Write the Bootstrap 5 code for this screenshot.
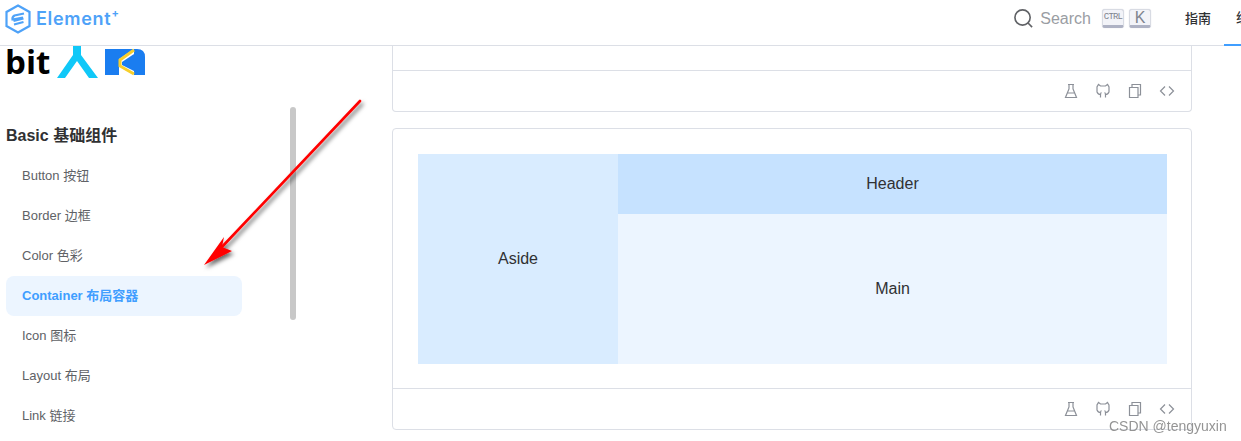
<!DOCTYPE html>
<html lang="zh">
<head>
    <meta charset="UTF-8">
    <meta name="viewport" content="width=device-width, initial-scale=1.0">
    <title>Container 布局容器</title>
    <link href="https://cdn.jsdelivr.net/npm/bootstrap@5.3.0/dist/css/bootstrap.min.css" rel="stylesheet">
    <style>
        html, body { height: 441px; overflow: hidden; }
        body { font-family: "Liberation Sans", "Noto Sans CJK SC", sans-serif; color: #303133; background: #fff; }
        .page-top { height: 46px; border-bottom: 1px solid #dcdfe6; padding-left: 5px; }
        .top-row { height: 37px; }
        .brand-word { font-family: "Inter", "Liberation Sans", sans-serif; font-size: 18px; font-weight: 600; color: #4ea2f8; margin-left: 5px; letter-spacing: .7px; }
        .brand-word sup { font-size: 11px; font-weight: 700; top: -.75em; margin-left: 0; letter-spacing: 0; }
        .search-word { font-size: 16px; color: #9a9da3; margin: 0 11px 0 6px; }
        .key-cap { height: 19px; border: 1px solid #d8dbe3; border-bottom: 3px solid #aeb2c4; border-radius: 3px; background: #f2f3f8; color: #80848f; box-shadow: 0 0 1px #c6c9d6; }
        .key-ctrl { width: 22px; font-size: 9px; font-family: "Liberation Mono", monospace; letter-spacing: -.8px; margin-right: 5px; }
        .key-k { width: 22px; font-size: 16px; }
        .top-link { font-size: 13px; color: #303133; font-weight: 500; }
        .top-link-main { margin-left: 34px; }
        .top-link-cut { width: 17px; height: 46px; margin: 0 0 -9px 13px; padding-left: 12px; overflow: hidden; white-space: nowrap; border-bottom: 2px solid #409eff; line-height: 36px; }
        .page-body { height: 395px; }
        .side-col { width: 392px; padding-left: 6px; }
        .bit-logo { height: 33px; }
        .bit-word { font-family: "Open Sans", "Liberation Sans", sans-serif; font-size: 33px; font-weight: 700; color: #000; line-height: 30px; margin: 1px 7px 0 -1px; }
        .side-title { font-size: 16px; font-weight: 700; margin: 45px 0 8px; line-height: 24px; color: #303133; }
        .side-item { width: 236px; height: 40px; line-height: 40px; padding-left: 16px; font-size: 13px; color: #606266; border-radius: 8px; }
        .side-item.active-item { background: #ecf5ff; color: #409eff; font-weight: 700; }
        .side-scroll { position: absolute; left: 290px; top: 61px; width: 6px; height: 213px; background: #c8c8c8; border-radius: 3px; }
        .main-col { width: 800px; }
        .demo-box { border: 1px solid #dcdfe6; border-radius: 4px; }
        .demo-cut { border-top: 0; border-top-left-radius: 0; border-top-right-radius: 0; height: 66px; margin-bottom: 16px; }
        .demo-space { height: 25px; border-bottom: 1px solid #dcdfe6; }
        .demo-tools { height: 40px; gap: 16px; padding-right: 16px; }
        .demo-tools svg { width: 16px; height: 16px; fill: none; stroke: #8c9098; stroke-width: 1.2; }
        .demo-full { height: 302px; }
        .demo-inner { height: 260px; padding: 25px 24px 24px 25px; border-bottom: 1px solid #dcdfe6; }
        .el-aside { width: 200px; background: #d9ecff; font-size: 16px; }
        .el-head { height: 60px; background: #c6e2ff; font-size: 16px; }
        .el-main { background: #ecf5ff; font-size: 16px; }
        .red-arrow { position: absolute; left: 195px; top: 90px; width: 175px; height: 185px; overflow: visible; }
        .mark-text { position: absolute; left: 1109px; top: 416px; font-size: 14px; color: #8f8f8f; opacity: .95; }
    </style>
</head>
<body>
    <header class="page-top">
        <div class="top-row d-flex align-items-center">
            <svg width="26" height="30" viewBox="0 0 26 30">
                <path d="M13 1.500 24.500 8V22L13 28.500 1.500 22V8Z" fill="none" stroke="#4ea2f8" stroke-width="2.200"/>
                <path d="M19 9.500 9.500 11.500Q7 13 7.500 15.500L18 13.500M18.500 14.500 8.500 17M18.500 18 9 20.500" fill="none" stroke="#4ea2f8" stroke-width="2.200"/>
            </svg>
            <span class="brand-word">Element<sup>+</sup></span>
            <div class="ms-auto d-flex align-items-center">
                <svg width="21" height="21" viewBox="0 0 22 22" fill="none" stroke="#606266" stroke-width="1.700">
                    <circle cx="10" cy="10" r="8"/>
                    <path d="M15.500 15.500 20 20"/>
                </svg>
                <span class="search-word">Search</span>
                <span class="key-cap key-ctrl d-flex align-items-center justify-content-center">CTRL</span>
                <span class="key-cap key-k d-flex align-items-center justify-content-center">K</span>
                <span class="top-link top-link-main">指南</span>
                <span class="top-link top-link-cut">组件</span>
            </div>
        </div>
    </header>

    <div class="page-body d-flex position-relative">
        <aside class="side-col flex-shrink-0">
            <div class="bit-logo d-flex align-items-start">
                <span class="bit-word">bit</span>
                <svg width="88" height="33" viewBox="0 0 88 33">
                    <path d="M16 0H24V9L41 32H32L20 15 8 32H0L16 9Z" fill="#10c8f8"/>
                    <path d="M48 3H62V29H48ZM62 3H77L62 13ZM77 3H80Q88 3 88 11V29H77ZM77 8 65 16V19L77 25Z" fill="#1a7df0"/>
                    <path d="M77 4 63 14V20L77 28" fill="none" stroke="#f7cf2b" stroke-width="3"/>
                </svg>
            </div>
            <div class="side-title">Basic 基础组件</div>
            <div class="side-item">Button 按钮</div>
            <div class="side-item">Border 边框</div>
            <div class="side-item">Color 色彩</div>
            <div class="side-item active-item">Container 布局容器</div>
            <div class="side-item">Icon 图标</div>
            <div class="side-item">Layout 布局</div>
            <div class="side-item">Link 链接</div>
        </aside>
        <div class="side-scroll"></div>

        <main class="main-col flex-shrink-0">
            <div class="demo-box demo-cut">
                <div class="demo-space"></div>
                <div class="demo-tools d-flex align-items-center justify-content-end">
                    <svg viewBox="0 0 16 16"><path d="M5 1.500H11M6 1.500V6L2.500 14.500H13.500L10 6V1.500M4.500 10H11.500"/></svg>
                    <svg viewBox="0 0 16 16"><path d="M5.500 14.500V11.500Q3 11.500 2 9V4L3.500 1.500 5.500 3H10.500L12.500 1.500 14 4V9Q13 11.500 10.500 11.500V14.500M5.500 11.500Q6 9.500 6.500 9.500M10.500 11.500Q10 9.500 9.500 9.500"/></svg>
                    <svg viewBox="0 0 16 16"><path d="M2.500 4.500H11V14.500H2.500ZM5 4.500V1.500H13.500V12H11"/></svg>
                    <svg viewBox="0 0 16 16"><path d="M6 3.500 1.500 8 6 12.500M10 3.500 14.500 8 10 12.500"/></svg>
                </div>
            </div>
            <div class="demo-box demo-full">
                <div class="demo-inner d-flex">
                    <div class="el-aside d-flex align-items-center justify-content-center">Aside</div>
                    <div class="flex-grow-1 d-flex flex-column">
                        <div class="el-head d-flex align-items-center justify-content-center">Header</div>
                        <div class="el-main flex-grow-1 d-flex align-items-center justify-content-center">Main</div>
                    </div>
                </div>
                <div class="demo-tools d-flex align-items-center justify-content-end">
                    <svg viewBox="0 0 16 16"><path d="M5 1.500H11M6 1.500V6L2.500 14.500H13.500L10 6V1.500M4.500 10H11.500"/></svg>
                    <svg viewBox="0 0 16 16"><path d="M5.500 14.500V11.500Q3 11.500 2 9V4L3.500 1.500 5.500 3H10.500L12.500 1.500 14 4V9Q13 11.500 10.500 11.500V14.500M5.500 11.500Q6 9.500 6.500 9.500M10.500 11.500Q10 9.500 9.500 9.500"/></svg>
                    <svg viewBox="0 0 16 16"><path d="M2.500 4.500H11V14.500H2.500ZM5 4.500V1.500H13.500V12H11"/></svg>
                    <svg viewBox="0 0 16 16"><path d="M6 3.500 1.500 8 6 12.500M10 3.500 14.500 8 10 12.500"/></svg>
                </div>
            </div>
        </main>
    </div>

    <svg class="red-arrow" viewBox="0 0 175 185">
        <defs>
            <filter id="arrowShade" x="-20%" y="-20%" width="140%" height="140%">
                <feDropShadow dx="2" dy="3" stdDeviation="2" flood-color="#000" flood-opacity=".6"/>
            </filter>
        </defs>
        <g filter="url(#arrowShade)">
            <path d="M165 11 25 159" stroke="#f00" stroke-width="2.600" stroke-linecap="round" fill="none"/>
            <path d="M9 175 29 147 27 157 37 161Z" fill="#f00"/>
        </g>
    </svg>
    <div class="mark-text">CSDN @tengyuxin</div>

    <script src="https://cdn.jsdelivr.net/npm/bootstrap@5.3.0/dist/js/bootstrap.bundle.min.js"></script>
</body>
</html>
